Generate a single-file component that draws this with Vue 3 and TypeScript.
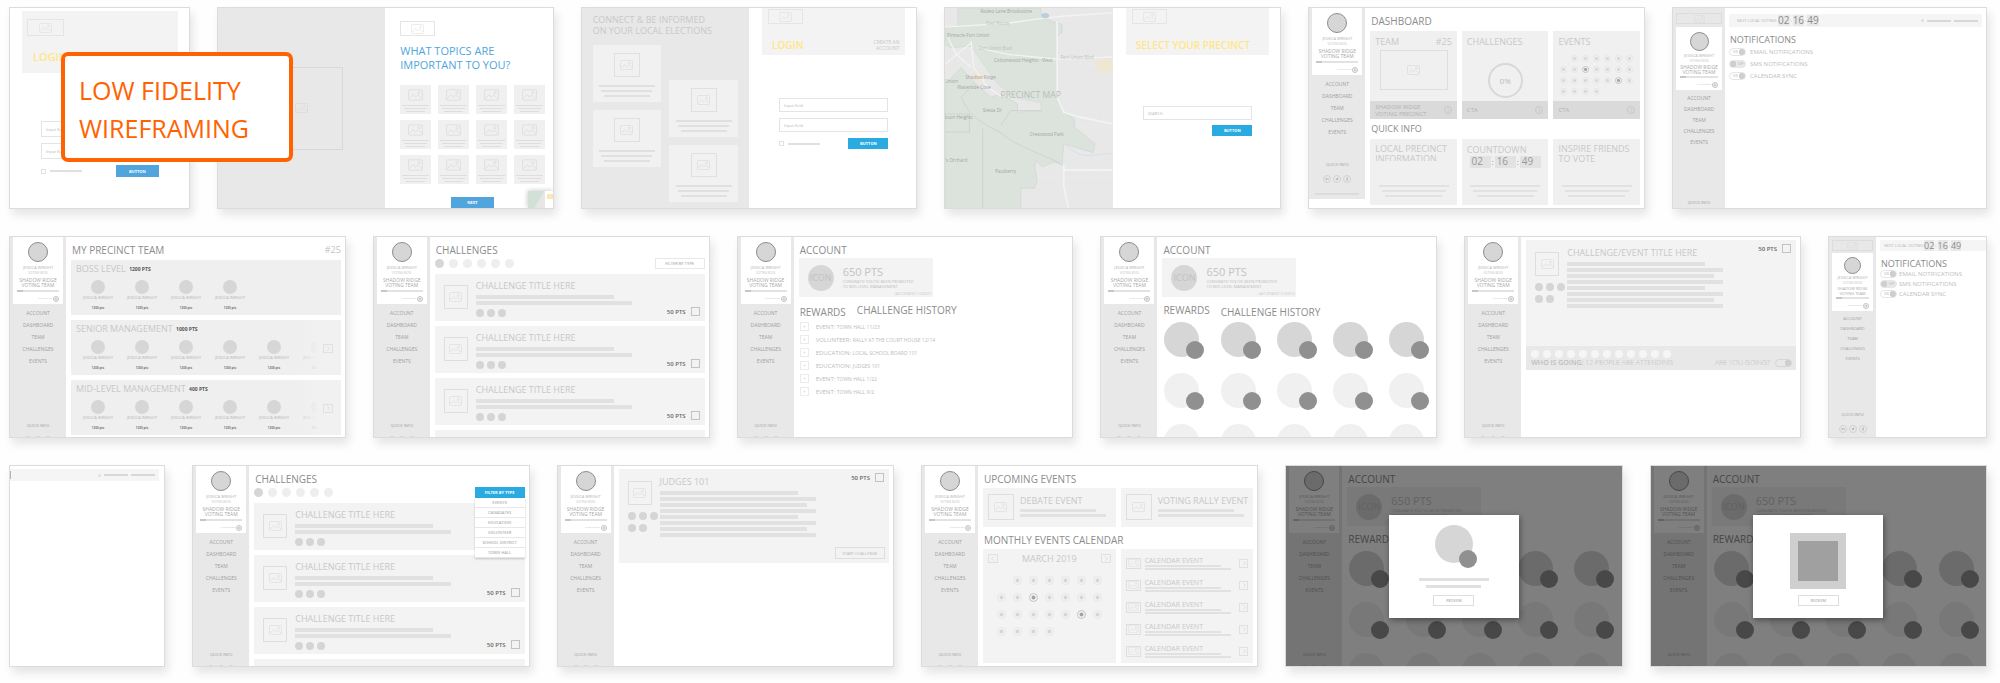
<script setup lang="ts">
type Kind =
  | 'loginCrop' | 'topics' | 'login' | 'map' | 'dashboard' | 'notify' | 'team' | 'challenges'
  | 'history' | 'rewards' | 'detail' | 'strip' | 'events'

interface Frame {
  id: string
  kind: Kind
  side?: 'full' | 'long' | 'branded' | 'small'
  size?: 'narrow' | 'wide'
  menu?: boolean
  title?: string
  modal?: 'badge' | 'square'
}

const rows: Frame[][] = [
  [
    { id: 'a', kind: 'loginCrop', size: 'narrow' },
    { id: 'b', kind: 'topics' },
    { id: 'c', kind: 'login' },
    { id: 'd', kind: 'map' },
    { id: 'e', kind: 'dashboard', side: 'full' },
    { id: 'f', kind: 'notify', side: 'branded', size: 'wide' },
  ],
  [
    { id: 'g', kind: 'team', side: 'long' },
    { id: 'h', kind: 'challenges', side: 'long' },
    { id: 'i', kind: 'history', side: 'long' },
    { id: 'j', kind: 'rewards', side: 'long' },
    { id: 'k', kind: 'detail', side: 'long', title: 'CHALLENGE/EVENT TITLE HERE' },
    { id: 'l', kind: 'notify', side: 'small', size: 'narrow' },
  ],
  [
    { id: 'm', kind: 'strip', size: 'narrow' },
    { id: 'n', kind: 'challenges', side: 'long', menu: true },
    { id: 'o', kind: 'detail', side: 'long', title: 'JUDGES 101' },
    { id: 'p', kind: 'events', side: 'long' },
    { id: 'q', kind: 'rewards', side: 'long', modal: 'badge' },
    { id: 'r', kind: 'rewards', side: 'long', modal: 'square' },
  ],
]

const nav = ['ACCOUNT', 'DASHBOARD', 'TEAM', 'CHALLENGES', 'EVENTS']
const teams = [
  { name: 'BOSS LEVEL', pts: '1200 PTS', people: 4 },
  { name: 'SENIOR MANAGEMENT', pts: '1000 PTS', people: 6 },
  { name: 'MID-LEVEL MANAGEMENT', pts: '400 PTS', people: 6 },
]
const history = [
  ['EVENT:', 'TOWN HALL 11/23'],
  ['VOLUNTEER:', 'RALLY AT THE COURT HOUSE 12/14'],
  ['EDUCATION:', 'LOCAL SCHOOL BOARD 101'],
  ['EDUCATION:', 'JUDGES 101'],
  ['EVENT:', 'TOWN HALL 1/22'],
  ['EVENT:', 'TOWN HALL 9/2'],
]
const filters = ['EVENTS', 'CANADATES', 'EDUCATION', 'VOLUNTEER', 'SCHOOL DISTRICT', 'TOWN HALL']
const settings = [
  { label: 'EMAIL NOTIFICATIONS', on: true },
  { label: 'SMS NOTIFICATIONS', on: false },
  { label: 'CALENDAR SYNC', on: true },
]
const copyLines = ['s', 'l', 'm', 'l', 's', 'l', 'm', 'l']
const days = Array.from({ length: 24 }, (_, i) => i + 1)
const marked = (d: number): boolean => d === 9 || d === 19
</script>

<template>
  <div class="board">
    <svg class="defs" aria-hidden="true">
      <symbol id="pic" viewBox="0 0 26 20">
        <rect x="1" y="1" width="24" height="18" rx="2" />
        <path d="M3 16 L9 9 L13 14 L17 10 L24 16" />
        <circle cx="19" cy="6" r="2" />
      </symbol>
      <symbol id="next" viewBox="0 0 10 10"><path d="M4 2 L7 5 L4 8" /></symbol>
      <symbol id="prev" viewBox="0 0 10 10"><path d="M6 2 L3 5 L6 8" /></symbol>
    </svg>

    <div v-for="(row, r) in rows" :key="r" class="row">
      <section v-for="f in row" :key="f.id" class="frame" :class="[f.kind, f.size]">
        <aside v-if="f.side" class="side" :class="f.side">
          <div v-if="f.side === 'branded' || f.side === 'small'" class="brand"><svg class="pic"><use href="#pic" /></svg></div>
          <div class="profile">
            <span class="avatar"></span>
            <span class="name">JESSICA WRIGHT</span>
            <span class="role">VOTING BOSS</span>
            <span class="squad">SHADOW RIDGE<br />VOTING TEAM</span>
            <span class="progress"><i></i></span>
            <span class="invite">INVITE FRIENDS <svg viewBox="0 0 12 12"><circle cx="6" cy="6" r="5" /><path d="M6 3V9M3 6H9" /></svg></span>
          </div>
          <nav>
            <a v-for="n in nav" :key="n" href="#">{{ n }}</a>
          </nav>
          <a class="quick" href="#">QUICK INFO</a>
          <div class="social">
            <span><svg viewBox="0 0 12 12"><path d="M6 6 H4 M6 6 A2 2 0 1 1 5 4 M7 6 H11 M9 4 V8" class="thin" /></svg></span>
            <span><svg viewBox="0 0 12 12"><path d="M2 9 Q5 9 5 7 Q2 6 2 3 Q4 5 6 5 Q6 2 8 2 L9 3 L10 3 Q10 10 4 10 Z" /></svg></span>
            <span><svg viewBox="0 0 12 12"><path d="M9 1 Q6 1 6 4 V12 M4 6 H9" class="thin" /></svg></span>
          </div>
          <span class="legal"></span>
        </aside>

        <!-- sign-in, cropped on the left edge -->
        <div v-if="f.kind === 'loginCrop'" class="signin tall">
          <header class="hero">
            <div class="picbox"><svg class="pic"><use href="#pic" /></svg></div>
            <h2>LOGIN</h2>
          </header>
          <form class="fields" @submit.prevent>
            <input type="text" placeholder="Input field" aria-label="User name" />
            <input type="text" placeholder="Input field" aria-label="Password" />
            <div class="actions">
              <input type="checkbox" class="tick" aria-label="Remember me" /><i class="stub"></i>
              <button class="btn">BUTTON</button>
            </div>
          </form>
        </div>

        <template v-else-if="f.kind === 'topics'">
          <div class="half grey center"><div class="bigpic"><svg class="pic"><use href="#pic" /></svg></div></div>
          <div class="half topicpane">
            <div class="picbox"><svg class="pic"><use href="#pic" /></svg></div>
            <h2>WHAT TOPICS ARE<br />IMPORTANT TO YOU?</h2>
            <div class="topicgrid">
              <div v-for="n in 12" :key="n" class="topic">
                <svg class="pic"><use href="#pic" /></svg>
                <i class="w27"></i><i class="w23"></i><i class="w19"></i>
              </div>
            </div>
            <button class="btn">NEXT</button>
            <div class="corner"><span></span><i></i></div>
          </div>
        </template>

        <template v-else-if="f.kind === 'login'">
          <div class="half grey connect">
            <h2>CONNECT &amp; BE INFORMED<br />ON YOUR LOCAL ELECTIONS</h2>
            <div class="columns">
              <div v-for="c in 2" :key="c" class="column">
                <div v-for="n in 2" :key="n" class="infocard">
                  <span class="thumb"><svg class="pic"><use href="#pic" /></svg></span>
                  <i class="w56"></i><i class="w51"></i><i class="w46"></i>
                </div>
              </div>
            </div>
          </div>
          <div class="half signin">
            <header class="hero">
              <div class="picbox"><svg class="pic"><use href="#pic" /></svg></div>
              <h2>LOGIN</h2>
              <a href="#" class="create">CREATE AN<br />ACCOUNT</a>
            </header>
            <form class="fields" @submit.prevent>
              <input type="text" placeholder="Input field" aria-label="User name" />
              <input type="text" placeholder="Input field" aria-label="Password" />
              <div class="actions">
                <input type="checkbox" class="tick" aria-label="Remember me" /><i class="stub"></i>
                <button class="btn">BUTTON</button>
              </div>
            </form>
          </div>
        </template>

        <template v-else-if="f.kind === 'map'">
          <div class="half grey">
            <svg class="precincts" viewBox="41 20 506 607" preserveAspectRatio="xMinYMin slice">
              <g class="streets">
                <path d="M380 60H547M385 100H547M400 140H547M380 170H547M390 210H547M380 250H547M395 300H547M440 340H547M400 380H547M490 420H547M400 460H547M290 560H547M320 530H547M280 600H547" />
                <path d="M410 20V300M440 20V340M465 20V360M520 20V627M430 470V627M350 500V627M300 570V627M380 500V627M470 460V627" />
                <path d="M400 330 Q450 300 440 250 T500 190M420 430 Q460 400 500 470M400 480 Q450 440 547 470" />
              </g>
              <g class="area">
                <path d="M80 20 H330 L335 50 L395 70 L395 95 L380 105 V290 L400 335 L432 355 V380 L494 430 L490 458 L400 430 L395 495 L372 485 L335 500 L315 480 L312 500 L320 545 L312 565 H270 V627 H41 V250 L90 200 L130 245 L180 290 L210 280 L260 310 L260 335 L333 330 L330 306 L250 290 L200 250 L150 180 L120 135 L60 140 L41 130 V80 L80 75 Z" />
                <path d="M120 135 L150 180 L200 250 L250 290 L330 306 L380 300 V130 L120 120 Z" class="seamless" />
                <path d="M41 340 H115 V395 H41M90 290 Q110 340 160 370 T200 390 Q240 425 300 450 T390 490M155 385V627M210 375 L240 330 L333 330M130 245 L100 280 L90 290" class="line" />
              </g>
              <path class="sand" d="M125 215 L160 212 L158 245 L128 240ZM495 180 L547 170 V215 L500 215Z" />
              <g class="roads">
                <path d="M41 78 L230 66 L330 52 L395 45 L547 35M120 120 L128 200 L170 260 L215 290M50 110 L75 160 L120 200M41 190 L120 125" />
                <path class="wide" d="M380 60V290L400 335L450 350L547 370M400 495V560L415 627M400 510H547" />
                <path d="M140 140 L230 160 L380 175 L547 168" />
              </g>
              <path class="river" d="M400 430 Q440 470 480 465 T547 460" />
              <ellipse class="shield" cx="344" cy="43" rx="12" ry="8" />
              <g class="places">
                <text x="148" y="35">Rodeo Lane Brookstone</text>
                <text x="166" y="71" class="road">East Route</text>
                <text x="47" y="109">Pinnacle Fort Union</text>
                <text x="142" y="147" class="road">Fort Union Blvd</text>
                <text x="189" y="183">Cottonwood Heights - West</text>
                <text x="390" y="174" class="road">Fort Union Blvd</text>
                <text x="103" y="234">Shadow Ridge</text>
                <text x="41" y="248">Union</text>
                <text x="78" y="265">Waterside Cove</text>
                <text x="155" y="333">Siesta Dr</text>
                <text x="41" y="355">kson Heights</text>
                <text x="297" y="406">Crestwood Park</text>
                <text x="41" y="487">'s Orchard</text>
                <text x="193" y="519">Paulberry</text>
              </g>
              <text x="209" y="291" class="maptitle">PRECINCT MAP</text>
            </svg>
          </div>
          <div class="half signin">
            <header class="hero">
              <div class="picbox"><svg class="pic"><use href="#pic" /></svg></div>
              <h2>SELECT YOUR PRECINCT</h2>
            </header>
            <form class="fields search" @submit.prevent>
              <input type="text" placeholder="SEARCH" aria-label="Search precinct" />
              <div class="actions"><button class="btn">BUTTON</button></div>
            </form>
          </div>
        </template>

        <main v-else-if="f.kind === 'dashboard'" class="main">
          <h2>DASHBOARD</h2>
          <div class="tiles">
            <article class="tile">
              <h3>TEAM <span>#25</span></h3>
              <div class="teampic"><svg class="pic"><use href="#pic" /></svg></div>
              <footer>SHADOW RIDGE<br />VOTING PRECINCT <svg class="go"><use href="#next" /></svg></footer>
            </article>
            <article class="tile">
              <h3>CHALLENGES</h3>
              <div class="ring">0%</div>
              <footer>CTA <svg class="go"><use href="#next" /></svg></footer>
            </article>
            <article class="tile">
              <h3>EVENTS</h3>
              <div class="days"><i v-for="d in days" :key="d" :class="{ on: marked(d) }"></i></div>
              <footer>CTA <svg class="go"><use href="#next" /></svg></footer>
            </article>
          </div>
          <h2 class="sub">QUICK INFO</h2>
          <div class="tiles">
            <article class="tile low"><h3 class="pairline clip">LOCAL PRECINCT<br />INFORMATION</h3><i class="w70"></i><i class="w64"></i><i class="w57"></i></article>
            <article class="tile low">
              <h3>COUNTDOWN</h3>
              <div class="clock"><b>02</b>:<b>16</b>:<b>49</b></div>
              <i class="w70"></i><i class="w64"></i><i class="w57"></i>
            </article>
            <article class="tile low"><h3 class="pairline">INSPIRE FRIENDS<br />TO VOTE</h3><i class="w70"></i><i class="w64"></i><i class="w57"></i></article>
          </div>
        </main>

        <main v-else-if="f.kind === 'notify'" class="main" :class="f.side">
          <div class="topbar">
            <small>NEXT LOCAL VOTING:</small>
            <strong><b>02</b>:<b>16</b>:<b>49</b></strong>
            <template v-if="f.side === 'branded'"><i class="dot"></i><i class="link"></i><i class="link"></i></template>
          </div>
          <h2>NOTIFICATIONS</h2>
          <label v-for="s in settings" :key="s.label" class="setting">
            <span class="switch"><input type="checkbox" :checked="s.on" /><em>{{ s.on ? 'ON' : 'OFF' }}</em></span>
            {{ s.label }}
          </label>
        </main>

        <main v-else-if="f.kind === 'strip'" class="main">
          <div class="topbar"><i class="cut"></i><i class="dot"></i><i class="link"></i><i class="link"></i></div>
        </main>

        <main v-else-if="f.kind === 'team'" class="main">
          <h2>MY PRECINCT TEAM <span>#25</span></h2>
          <article v-for="t in teams" :key="t.name" class="level">
            <h3>{{ t.name }} <b>{{ t.pts }}</b></h3>
            <div class="people">
              <div v-for="p in t.people" :key="p" class="person"><i></i><span>JESSICA WRIGHT</span><b>1200 pts</b></div>
            </div>
            <div v-if="t.people > 4" class="more"><button aria-label="More people"><svg><use href="#next" /></svg></button></div>
          </article>
        </main>

        <main v-else-if="f.kind === 'challenges'" class="main">
          <h2>CHALLENGES</h2>
          <div class="types">
            <i v-for="n in 6" :key="n"></i>
            <div class="filter" :class="{ open: f.menu }">
              <button>FILTER BY TYPE</button>
              <div v-if="f.menu" class="menu"><button v-for="o in filters" :key="o">{{ o }}</button></div>
            </div>
          </div>
          <article v-for="n in 4" :key="n" class="challenge">
            <template v-if="n < 4">
              <span class="thumb"><svg class="pic"><use href="#pic" /></svg></span>
              <div class="copy">
                <h3>CHALLENGE TITLE HERE</h3>
                <i class="s"></i><i class="l"></i>
                <div class="dots"><i></i><i></i><i></i></div>
              </div>
              <label v-if="!f.menu || n > 1" class="pts">50 PTS <input type="checkbox" class="tick" /></label>
            </template>
          </article>
        </main>

        <main v-else-if="f.kind === 'history' || f.kind === 'rewards'" class="main">
          <h2>ACCOUNT</h2>
          <div class="score">
            <span class="icon">ICON</span>
            <div>
              <strong>650 PTS</strong>
              <p>CONGRATS! YOU'VE BEEN PROMOTED<br />TO MID-LEVEL MANAGEMENT</p>
            </div>
            <small>LAST UPDATED 1/14/2019</small>
          </div>
          <div class="tabs">
            <a href="#" :class="{ on: f.kind === 'rewards' }">REWARDS</a>
            <a href="#" :class="{ on: f.kind === 'history' }">CHALLENGE HISTORY</a>
          </div>
          <ul v-if="f.kind === 'history'" class="log">
            <li v-for="(h, n) in history" :key="n">
              <label><input type="checkbox" class="tick" checked /><span>{{ h[0] }} <small>{{ h[1] }}</small></span></label>
            </li>
          </ul>
          <div v-else class="badges"><div v-for="n in 15" :key="n" class="badge"></div></div>
        </main>

        <main v-else-if="f.kind === 'detail'" class="main">
          <article class="detailcard">
            <div class="media">
              <span class="thumb"><svg class="pic"><use href="#pic" /></svg></span>
              <div class="dots"><i v-for="n in 5" :key="n"></i></div>
            </div>
            <div class="copy">
              <h3>{{ f.title }}</h3>
              <i v-for="(c, n) in copyLines" :key="n" :class="c"></i>
            </div>
            <label class="pts">50 PTS <input type="checkbox" class="tick" /></label>
            <button v-if="f.id === 'o'" class="start">START CHALLENGE</button>
          </article>
          <footer v-if="f.id === 'k'" class="going">
            <div class="guests"><i v-for="n in 12" :key="n"></i></div>
            <div class="line">
              <span><b>WHO IS GOING:</b> 12 PEOPLE ARE ATTENDING</span>
              <label>ARE YOU GOING? <span class="switch"><input type="checkbox" checked /></span></label>
            </div>
          </footer>
        </main>

        <main v-else class="main">
          <h2>UPCOMING EVENTS</h2>
          <div class="pair">
            <article v-for="t in ['DEBATE EVENT', 'VOTING RALLY EVENT']" :key="t" class="upcoming">
              <span class="thumb"><svg class="pic"><use href="#pic" /></svg></span>
              <div class="copy"><h3>{{ t }}</h3><i class="w76"></i><i class="w86"></i></div>
            </article>
          </div>
          <h2 class="second">MONTHLY EVENTS CALENDAR</h2>
          <div class="pair">
            <article class="month">
              <header>
                <button aria-label="Previous month"><svg><use href="#prev" /></svg></button>
                <h3>MARCH 2019</h3>
                <button aria-label="Next month"><svg><use href="#next" /></svg></button>
              </header>
              <div class="days"><i v-for="d in days" :key="d" :class="{ on: marked(d) }"></i></div>
            </article>
            <article class="agenda">
              <div v-for="n in 5" :key="n" class="entry">
                <span class="thumb"><svg class="pic"><use href="#pic" /></svg></span>
                <div class="copy"><h3>CALENDAR EVENT</h3><i class="w76"></i><i class="w86"></i></div>
                <button aria-label="Open event"><svg><use href="#next" /></svg></button>
              </div>
            </article>
          </div>
        </main>

        <div v-if="f.modal" class="shade">
          <div class="modal">
            <template v-if="f.modal === 'badge'">
              <div class="badge"></div>
              <i class="w70"></i><i class="w55"></i>
            </template>
            <div v-else class="square"></div>
            <button>REDEEM</button>
          </div>
        </div>
      </section>
    </div>

    <h1 class="label">LOW FIDELITY<br />WIREFRAMING</h1>
  </div>
</template>

<style>
body { margin: 0; background: #fefefe; }
</style>

<style scoped>
* { box-sizing: border-box; }
.board {
  position: relative;
  display: flex;
  flex-direction: column;
  gap: 27px;
  padding: 7px 13px 14px 9px;
  overflow: hidden;
  font-family: "Open Sans", "Noto Sans", sans-serif;
  line-height: 1;
  color: #8c8c8c;
}
.defs { position: absolute; width: 0; height: 0; }
h1, h2, h3, p, ul { margin: 0; padding: 0; font-weight: 400; }
a { color: inherit; text-decoration: none; }
i, em { font-style: normal; }
button, input { font-family: inherit; margin: 0; padding: 0; }
button { cursor: pointer; white-space: nowrap; }
svg { fill: none; stroke: #d4d4d4; }
.row { display: flex; gap: 27px; height: 202px; }
.frame {
  position: relative;
  display: flex;
  flex: 337 1 0;
  min-width: 0;
  overflow: hidden;
  background: #fff;
  border: 1px solid #dcdcdc;
  box-shadow: 3px 6px 9px rgba(0, 0, 0, 0.1);
}
.frame.wide { flex-grow: 315; }
.frame.narrow { flex-grow: 158; }
.frame.strip { flex-grow: 155; }
.frame.loginCrop { flex-grow: 180; }
h2 { font-size: 10px; line-height: 12px; white-space: nowrap; }
h3 { font-size: 9px; line-height: 11px; white-space: nowrap; color: #c8c8c8; }
.pic { width: 13px; height: 10px; display: block; }
.tick {
  appearance: none;
  width: 9px;
  height: 9px;
  flex: none;
  border: 1px solid #c2c2c2;
  background: transparent;
}

/* sidebar */
.side {
  --av: 20px;
  --pad: 5px;
  --lead: 3px;
  --nav: 12px;
  --bar: 2px;
  flex: none;
  width: 56px;
  padding: 0 3px;
  background: #e8e8e8;
  display: flex;
  flex-direction: column;
  align-items: stretch;
  text-align: center;
}
.side > * { flex: none; }
.side.full { height: 191px; }
.side.branded { --av: 19px; --lead: 2px; --nav: 11px; --bar: 1px; width: 52px; }
.side.small { --av: 17px; --pad: 4px; --lead: 1px; --nav: 10px; --bar: 1px; width: 47px; }
.brand {
  height: 11px;
  margin: 5px 0 3px;
  border: 1px solid #dcdcdc;
  display: flex;
  align-items: center;
  justify-content: center;
}
.small .brand { margin: 3px 0 2px; }
.brand .pic { height: 8px; }
.profile {
  background: #fff;
  padding: var(--pad) 4px 2px;
  display: flex;
  flex-direction: column;
  align-items: center;
  white-space: nowrap;
}
.avatar { width: var(--av); height: var(--av); border-radius: 50%; background: #d6d6d6; border: 1px solid #8d8d8d; }
.name { font-size: 4px; line-height: 6px; margin-top: var(--lead); color: #b0b0b0; }
.role { font-size: 3px; line-height: 4px; color: #c4c4c4; }
.squad { font-size: 5px; line-height: 5px; margin-top: var(--lead); color: #a8a8a8; }
.small .squad { font-size: 4px; }
.progress { align-self: stretch; height: 2px; margin-top: var(--bar); background: #e2e2e2; display: flex; }
.progress i { width: 6px; background: #c6c6c6; }
.invite { align-self: flex-end; display: flex; align-items: center; gap: 1px; height: 6px; margin-top: 4px; font-size: 2px; color: #c0c0c0; }
.invite svg { width: 6px; height: 6px; stroke: #c2c2c2; stroke-width: 2; }
nav { display: flex; flex-direction: column; margin-top: 3px; font-size: 5px; line-height: var(--nav); color: #9f9f9f; }
.small nav { font-size: 4px; }
.quick { font-size: 4px; line-height: 8px; margin-top: 55px; color: #a2a2a2; }
.full .quick { margin-top: 23px; }
.side.branded .quick { margin-top: 51px; }
.small .quick { margin-top: 47px; }
.social { display: flex; justify-content: center; gap: 2px; margin-top: 6px; }
.side.branded .social { margin-top: 16px; }
.social span {
  width: 8px;
  height: 8px;
  border: 1px solid #d2d2d2;
  border-radius: 50%;
  display: flex;
  align-items: center;
  justify-content: center;
}
.social svg { width: 4px; height: 4px; fill: #aaa; stroke: none; }
.social .thin { fill: none; stroke: #aaa; stroke-width: 2; }
.legal { height: 2px; margin: 10px 3px 0; background: #dcdcdc; }
.small .legal { margin-top: 4px; }

/* split screens */
.half { flex: 0 0 50%; min-width: 0; position: relative; }
.grey { background: #e8e8e8; }
.center { display: flex; align-items: center; justify-content: center; }
.bigpic { width: 50%; height: 83px; border: 1px solid #d8d8d8; display: flex; align-items: center; justify-content: center; }
.picbox { width: 35px; height: 15px; border: 1px solid #e5e5e5; display: flex; align-items: center; justify-content: center; }
.picbox .pic { stroke: #dadada; }
.btn { height: 11px; width: 40px; border: 0; background: #29abe2; color: #fff; font-size: 4px; font-weight: 700; line-height: 11px; }
.signin { display: flex; flex-direction: column; padding: 0 11px 0 13px; }
.hero { height: 47px; background: #f3f3f3; padding: 1px 6px 0; display: grid; grid-template-columns: 1fr auto; align-content: start; }
.hero .picbox { grid-column: 1 / -1; }
.hero h2 { color: #ffe68a; font-weight: 600; padding-left: 4px; margin-top: 15px; }
.create { font-size: 5px; line-height: 6px; text-align: right; margin-top: 15px; color: #c8c8c8; }
.fields { display: flex; flex-direction: column; gap: 6px; margin: 43px 17px 0; }
.fields.search { margin-top: 51px; gap: 5px; }
.fields input[type="text"] { width: 100%; height: 14px; border: 1px solid #e4e4e4; padding: 0 4px; font-size: 4px; background: #fff; color: #aaa; }
.fields input::placeholder { color: #b8b8b8; opacity: 1; }
.actions { display: flex; align-items: center; }
.actions .tick { width: 5px; height: 5px; border-color: #e2e2e2; }
.stub { width: 32px; height: 2px; margin-left: 4px; background: #e0e0e0; }
.actions .btn { margin-left: auto; }
.tall { flex: 1; padding: 3px 11px 0 12px; }
.tall .hero { height: 62px; padding: 8px 5px 0; }
.tall .hero .picbox { width: 37px; height: 17px; }
.tall .hero h2 { font-size: 11px; margin-top: 15px; padding-left: 6px; }
.tall .fields { margin: 48px 19px 0; }
.tall .fields input[type="text"] { height: 16px; }
.tall .btn, .topicpane .btn { background: #4fa5dc; width: 43px; height: 12px; }

.topicpane { padding: 13px 8px 0 15px; display: flex; flex-direction: column; }
.topicpane h2 { color: #4fa5dc; font-size: 11px; line-height: 14px; margin: 8px 0 13px; font-weight: 500; }
.topicgrid { display: grid; grid-template-columns: repeat(4, 1fr); gap: 6px 7px; }
.topic { height: 29px; background: #f0f0f0; display: flex; flex-direction: column; align-items: center; gap: 1px; padding-top: 4px; }
.topic .pic { height: 12px; width: 15px; margin-bottom: 3px; }
.topic i { height: 1px; background: #dedede; margin-bottom: 1px; }
.topicpane .btn { align-self: center; margin-top: 13px; height: 11px; }
.corner { position: absolute; right: 0; bottom: 0; width: 25px; height: 17px; background: #fff; box-shadow: 0 0 5px rgba(0, 0, 0, 0.25); display: flex; }
.corner span { width: 17px; background: linear-gradient(120deg, #d3e0d5 60%, #e6e6e6 61%); }
.corner i { flex: 1; height: 5px; margin: 3px 0 0 2px; background: #fbe7b5; }

.w19 { width: 19px; } .w23 { width: 23px; } .w27 { width: 27px; }
.w46 { width: 46px; } .w51 { width: 51px; } .w55 { width: 55px; } .w56 { width: 56px; } .w57 { width: 57px; }
.w64 { width: 64px; } .w70 { width: 70px; } .w76 { width: 76px; } .w86 { width: 86px; }

.connect { padding: 6px 11px 0; }
.connect h2 { font-size: 9px; line-height: 11px; color: #c9c9c9; }
.columns { display: flex; gap: 8px; margin-top: 9px; }
.column { flex: 1; display: flex; flex-direction: column; gap: 8px; }
.column + .column { padding-top: 35px; }
.infocard { height: 57px; background: #f1f1f1; display: flex; flex-direction: column; align-items: center; padding-top: 8px; }
.infocard .thumb { width: 26px; height: 24px; border: 1px solid #e0e0e0; display: flex; align-items: center; justify-content: center; margin-bottom: 8px; }
.infocard i { height: 2px; background: #e0e0e0; margin-bottom: 3px; }

.precincts { width: 100%; height: 100%; display: block; stroke: none; }
.streets { stroke: #eeeeee; stroke-width: 1; }
.area { fill: #dbe3dc; stroke: #ccd7ce; stroke-width: 2; }
.area .seamless { stroke: none; }
.area .line { fill: none; stroke: #c3cfc5; }
.sand { fill: #efe6d3; }
.roads { stroke: #f3f3f3; stroke-width: 4; }
.roads .wide { stroke-width: 5; }
.river { stroke: #d5dfe8; stroke-width: 3; }
.shield { fill: #b9cfe0; }
.places { fill: #a4a4a4; font-size: 14px; font-weight: 500; }
.places .road { fill: #c0c0c0; font-weight: 400; }
.maptitle { fill: #bcbcbc; font-size: 26px; }

/* shared main area */
.main { flex: 1; min-width: 0; padding: 7px 4px 0 5px; display: flex; flex-direction: column; }
.main > * { flex: none; }
.main > h2 { padding-left: 1px; }
.thumb { flex: none; display: flex; align-items: center; justify-content: center; border: 1px solid #dedede; }

.tiles { display: grid; grid-template-columns: repeat(3, 1fr); gap: 5px; margin-top: 4px; }
.tile { height: 88px; background: #f0f0f0; display: flex; flex-direction: column; align-items: center; padding-top: 5px; }
.tile h3 { align-self: stretch; display: flex; justify-content: space-between; padding: 0 5px; }
.teampic { width: 68px; height: 40px; border: 1px solid #dedede; margin-top: 3px; display: flex; align-items: center; justify-content: center; }
.ring { width: 35px; height: 35px; margin-top: 16px; border: 2px solid #d8d8d8; border-radius: 50%; font-size: 8px; line-height: 31px; text-align: center; color: #bbb; }
.tile footer { position: relative; align-self: stretch; margin-top: auto; height: 18px; padding: 3px 5px 0; background: #dadada; font-size: 6px; line-height: 7px; color: #b3b3b3; white-space: nowrap; }
.tile:not(:first-child) footer { padding-top: 6px; }
.go { position: absolute; right: 5px; top: 5px; width: 8px; height: 8px; border: 1px solid #c8c8c8; border-radius: 50%; stroke: #c0c0c0; }
.days { display: grid; grid-template-columns: repeat(7, 7px); gap: 4px; margin-top: 8px; }
.days i { width: 7px; height: 7px; border-radius: 50%; border: 1px solid #e6e6e6; background: radial-gradient(closest-side, #d6d6d6 50%, transparent 65%); }
.days i.on { border-color: #c4c4c4; background: radial-gradient(closest-side, #a2a2a2 50%, transparent 65%); }
.days i:first-child { grid-column: 2; }
.sub { font-size: 9px; margin-top: 4px; }
.tile.low { height: 66px; }
.tile.low > i { height: 2px; margin-bottom: 3px; background: #e2e2e2; }
.tile.low > h3 + i { margin-top: 20px; }
.tile .pairline { display: block; height: 21px; line-height: 10px; }
.tile .clip { height: 17px; margin-bottom: 4px; overflow: hidden; }
.clock { display: flex; align-items: center; gap: 1px; margin: 1px 0 17px; font-size: 8px; color: #999; }
.clock b { width: 21px; height: 12px; background: #e2e2e2; font-size: 10px; line-height: 11px; font-weight: 400; padding-left: 2px; text-align: left; }
.tile.low .clock + i { margin-top: 0; }

/* notifications */
.notify .main { padding: 6px 4px 0; }
.notify .main.small { padding: 3px 0 0 4px; }
.topbar { height: 13px; background: #f5f5f5; display: flex; align-items: center; padding: 0 4px 0 8px; }
.topbar small { font-size: 4px; color: #b5b5b5; white-space: nowrap; width: 41px; }
.topbar strong { display: flex; align-items: center; gap: 1px; margin-right: auto; font-size: 4px; color: #b0b0b0; }
.topbar b { font-size: 10px; line-height: 11px; font-weight: 500; background: #e8e8e8; color: #8c8c8c; }
.small .topbar { height: 11px; padding-left: 4px; }
.small .topbar small { width: 40px; }
.small .topbar b { font-size: 9px; }
.topbar .dot { width: 3px; height: 3px; border-radius: 50%; background: #e0e0e0; margin-left: auto; }
.topbar .link { width: 24px; height: 2px; background: #d8d8d8; margin-left: 3px; }
.notify h2 { font-size: 9px; margin: 7px 0 0; color: #8a8a8a; }
.setting { display: flex; align-items: center; gap: 4px; height: 12px; font-size: 6px; color: #bdbdbd; white-space: nowrap; }
.small .topbar + h2 { margin-top: 7px; line-height: 11px; }
.small .setting { height: 10px; gap: 2px; }
.switch { position: relative; width: 17px; height: 8px; flex: none; display: block; }
.switch input { appearance: none; display: block; width: 100%; height: 8px; border: 1px solid #e6e6e6; border-radius: 4px; background: radial-gradient(circle at 3px 3px, #cecece 3px, transparent 3px) #e8e8e8; }
.switch input:checked { background: radial-gradient(circle at 12px 3px, #cecece 3px, transparent 3px) #fff; }
.switch em { position: absolute; left: 4px; top: 2px; font-size: 3px; line-height: 4px; color: #b0b0b0; }
.switch input:not(:checked) + em { left: 9px; }

.strip .main { padding: 3px 5px 0 0; }
.strip .topbar { padding-left: 0; height: 12px; }
.cut { width: 1px; height: 8px; background: #b5b5b5; }

/* team */
.team h2 { display: flex; justify-content: space-between; margin-bottom: 4px; }
.team h2 span { font-size: 9px; color: #c3c3c3; }
.level { position: relative; height: 55px; background: #efefef; margin-bottom: 5px; padding: 3px 0 0 5px; overflow: hidden; }
.level h3 b { font-size: 5px; font-weight: 700; color: #555; vertical-align: 1px; margin-left: 1px; }
.people { display: flex; margin-top: 5px; }
.person { flex: none; width: 44px; display: flex; flex-direction: column; align-items: center; font-size: 4px; white-space: nowrap; color: #b4b4b4; }
.person i { width: 14px; height: 14px; border-radius: 50%; background: #d6d6d6; margin-bottom: 1px; }
.person span { line-height: 6px; }
.person b { font-size: 3px; line-height: 5px; margin-top: 5px; color: #777; }
.more { position: absolute; right: 0; top: 0; bottom: 0; width: 46px; background: linear-gradient(90deg, transparent, #f1f1f1 50%); }
.more button, .month button, .entry button { width: 10px; height: 9px; border: 1px solid #e0e0e0; background: transparent; display: block; }
.more button { margin: 24px 8px 0 auto; }
.more svg, .month svg, .entry button svg { width: 8px; height: 7px; display: block; stroke: #d4d4d4; }

/* challenges */
.types { display: flex; align-items: center; gap: 5px; height: 11px; margin: 2px 0 5px; position: relative; }
.types > i { width: 9px; height: 9px; border-radius: 50%; background: #eee; }
.types > i:first-child { background: #d6d6d6; }
.filter { margin-left: auto; width: 50px; position: relative; }
.filter button { display: block; width: 100%; height: 11px; border: 1px solid #e8e8e8; background: #fff; color: #b0b0b0; font-size: 4px; font-weight: 600; line-height: 9px; }
.filter.open > button { background: #29abe2; border-color: #29abe2; color: #fff; font-weight: 700; }
.menu { position: absolute; left: 0; right: 0; top: 11px; z-index: 1; box-shadow: 0 1px 2px rgba(0, 0, 0, 0.2); }
.menu button { border-width: 0 0 1px; height: 10px; }
.challenge, .detailcard { display: flex; position: relative; background: #f3f3f3; }
.challenge { height: 47px; margin-bottom: 5px; padding-left: 9px; }
.challenge .thumb { width: 24px; height: 24px; margin-top: 11px; }
.copy { display: flex; flex-direction: column; margin-left: 8px; min-width: 0; }
.copy > i { height: 4px; background: #e1e1e1; margin-bottom: 2px; }
.copy > .s { width: 138px; } .copy > .m { width: 147px; } .copy > .l { width: 156px; }
.challenge h3 { margin: 6px 0 4px; }
.dots { display: flex; flex-wrap: wrap; gap: 3px; }
.dots i { width: 8px; height: 8px; border-radius: 50%; background: #d5d5d5; }
.challenge .dots { margin-top: 2px; }
.pts { margin-left: auto; display: flex; align-items: center; gap: 5px; font-size: 6px; font-weight: 600; color: #666; white-space: nowrap; height: 9px; }
.challenge .pts { align-self: flex-end; margin: 0 5px 5px auto; }

/* account */
.score { position: relative; width: 134px; height: 39px; background: #f3f3f3; margin-top: 2px; padding-left: 9px; display: flex; align-items: center; gap: 9px; white-space: nowrap; }
.icon { width: 26px; height: 26px; border-radius: 50%; background: #d6d6d6; color: #c2c2c2; font-size: 9px; line-height: 26px; text-align: center; }
.score strong { display: block; font-size: 11px; line-height: 12px; font-weight: 400; color: #c3c3c3; }
.score p { font-size: 4px; line-height: 5px; margin-top: 1px; color: #bdbdbd; }
.score small { position: absolute; right: 2px; bottom: 1px; font-size: 3px; line-height: 4px; color: #c8c8c8; }
.tabs { display: flex; gap: 11px; padding: 7px 0 0 1px; height: 23px; font-size: 10px; line-height: 12px; white-space: nowrap; }
.tabs a { padding-top: 2px; }
.tabs a.on { padding-top: 0; }
.log { list-style: none; padding-left: 1px; }
.log label { display: flex; align-items: center; gap: 7px; height: 13px; font-size: 6px; color: #bcbcbc; white-space: nowrap; }
.log small { font-size: 5px; }
.log .tick { border-color: #ebebeb; background: radial-gradient(closest-side, #dedede 20%, transparent 35%); }
.badges { display: grid; grid-template-columns: repeat(5, 1fr); padding: 2px 0 0 2px; margin-right: -13px; }
.badges .badge { height: 51px; }
.badge { position: relative; }
.badge::before, .badge::after { content: ""; position: absolute; border-radius: 50%; }
.badge::before { left: 0; top: 0; width: 35px; height: 35px; background: #f0f0f0; }
.badge:nth-child(-n + 5)::before { background: #d6d6d6; }
.badge::after { left: 22px; top: 19px; width: 18px; height: 18px; background: #909090; }

/* detail */
.detail .main { padding-top: 3px; }
.detailcard { height: 106px; padding: 0 5px 0 9px; }
.frame.detail .start { position: absolute; right: 4px; bottom: 4px; width: 50px; height: 12px; border: 1px solid #dedede; background: transparent; color: #b4b4b4; font-size: 4px; }
.detailcard:last-child { height: 94px; }
.media { width: 32px; padding-top: 12px; }
.media .thumb { width: 24px; height: 24px; }
.media .dots { margin-top: 7px; gap: 4px 3px; }
.detailcard .copy { margin-left: 0; }
.detailcard h3 { margin: 7px 0 4px; }
.detailcard .pts { margin-top: 4px; }
.going { background: #e8e8e8; height: 24px; padding: 4px 4px 0 5px; }
.guests { display: flex; gap: 4px; }
.guests i { width: 8px; height: 8px; border-radius: 50%; background: #f6f6f6; }
.line { display: flex; justify-content: space-between; align-items: center; font-size: 7px; line-height: 10px; color: #bdbdbd; white-space: nowrap; font-weight: 300; }
.line b { font-weight: 600; }
.line label { display: flex; align-items: center; gap: 5px; }
.going .switch input { background-color: transparent; border-color: #d6d6d6; }

/* events */
.pair { display: grid; grid-template-columns: 1fr 1fr; gap: 5px; margin-top: 3px; }
.pair article { background: #f3f3f3; min-width: 0; }
.upcoming { display: flex; height: 39px; padding: 6px 0 0 5px; }
.upcoming .thumb { width: 26px; height: 26px; }
.upcoming .copy { margin-left: 6px; }
.upcoming h3 { margin: 1px 0 3px; }
.upcoming .copy > i { height: 3px; }
.second { margin-top: 7px; }
.month { height: 114px; padding: 4px 5px; }
.month header { display: flex; justify-content: space-between; align-items: center; }
.month .days { grid-template-columns: repeat(7, 9px); justify-content: center; gap: 8px 7px; margin-top: 12px; }
.month .days i { width: 9px; height: 9px; }
.agenda { height: 114px; padding: 5px 5px 0; }
.entry { display: flex; align-items: center; height: 18px; margin-bottom: 4px; }
.entry .thumb { width: 15px; height: 11px; }
.entry .pic { height: 8px; }
.entry .copy { margin-left: 4px; }
.entry h3 { font-size: 7px; line-height: 9px; }
.entry .copy > i { height: 2px; margin-bottom: 1px; }
.entry button { margin-left: auto; width: 9px; }

/* dialogs */
.shade { position: absolute; inset: 0; background: rgba(0, 0, 0, 0.5); display: flex; align-items: center; justify-content: center; }
.modal { width: 130px; height: 103px; background: #fff; display: flex; flex-direction: column; align-items: center; box-shadow: 1px 2px 6px rgba(0, 0, 0, 0.4); }
.modal .badge { width: 38px; height: 38px; margin: 10px 0 15px; }
.modal .badge::before { width: 38px; height: 38px; background: #d6d6d6; }
.modal .badge::after { left: 24px; top: 25px; background: #909090; }
.modal i { height: 3px; background: #e0e0e0; margin-bottom: 4px; }
.modal button { width: 41px; height: 11px; margin: auto 0 12px; border: 1px solid #dedede; background: #fff; font-size: 4px; line-height: 9px; color: #999; }
.square { width: 56px; height: 56px; margin-top: 18px; background: #a0a0a0; border: 8px solid #cfcfcf; }

.label {
  position: absolute;
  left: 61px;
  top: 52px;
  padding: 15px 40px 11px 14px;
  border: 4px solid #ff6200;
  border-radius: 7px;
  background: #fff;
  color: #ff6200;
  font-size: 25px;
  font-weight: 500;
  line-height: 38px;
  white-space: nowrap;
}
</style>
